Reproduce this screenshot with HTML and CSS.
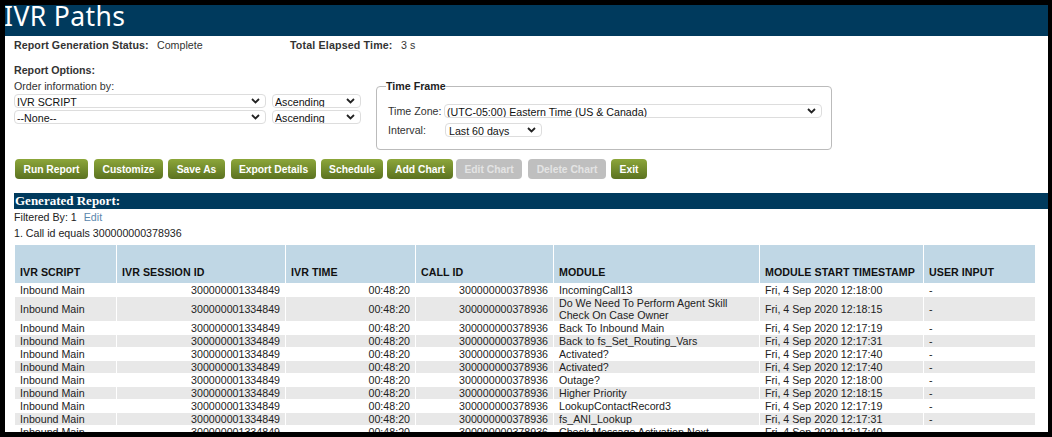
FILE: index.html
```html
<!DOCTYPE html>
<html lang="en">
<head>
<meta charset="utf-8">
<title>IVR Paths</title>
<link rel="stylesheet" href="styles.css">
</head>
<body>
<div class="frame">
  <h1 class="title">IVR Paths</h1>
  <div class="content">
    <div class="status">
      <b class="status-label">Report Generation Status:</b><span class="status-value">Complete</span>
      <b class="status-label elapsed">Total Elapsed Time:</b><span>3 s</span>
    </div>
    <div class="options">
      <div class="order">
        <b class="options-title">Report Options:</b>
        <div class="order-label">Order information by:</div>
        <div class="select-row">
          <select class="sel-order"><option>IVR SCRIPT</option></select>
          <select class="sel-dir"><option>Ascending</option></select>
        </div>
        <div class="select-row">
          <select class="sel-order"><option>--None--</option></select>
          <select class="sel-dir"><option>Ascending</option></select>
        </div>
      </div>
      <fieldset class="timeframe">
        <legend>Time Frame</legend>
        <div class="tf-row tf-first">
          <label class="tf-label">Time Zone:</label>
          <select class="sel-zone"><option>(UTC-05:00) Eastern Time (US &amp; Canada)</option></select>
        </div>
        <div class="tf-row">
          <label class="tf-label">Interval:</label>
          <select class="sel-interval"><option>Last 60 days</option></select>
        </div>
      </fieldset>
    </div>
    <div class="buttons">
      <button class="btn b1">Run Report</button>
      <button class="btn b2">Customize</button>
      <button class="btn b3">Save As</button>
      <button class="btn b4">Export Details</button>
      <button class="btn b5">Schedule</button>
      <button class="btn b6">Add Chart</button>
      <button class="btn off b7" disabled>Edit Chart</button>
      <button class="btn off b8" disabled>Delete Chart</button>
      <button class="btn b9">Exit</button>
    </div>
    <div class="report-bar">Generated Report:</div>
    <div class="filter">Filtered By: 1 <a class="edit">Edit</a></div>
    <div class="filter-rule">1. Call id equals 300000000378936</div>
    <table class="grid">
      <thead>
        <tr>
          <th class="c1">IVR SCRIPT</th><th class="c2">IVR SESSION ID</th><th class="c3">IVR TIME</th><th class="c4">CALL ID</th><th class="c5">MODULE</th><th class="c6">MODULE START TIMESTAMP</th><th class="c7">USER INPUT</th>
        </tr>
      </thead>
      <tbody>
        <tr><td>Inbound Main</td><td class="num">300000001334849</td><td class="num">00:48:20</td><td class="num">300000000378936</td><td>IncomingCall13</td><td>Fri, 4 Sep 2020 12:18:00</td><td>-</td></tr>
        <tr><td>Inbound Main</td><td class="num">300000001334849</td><td class="num">00:48:20</td><td class="num">300000000378936</td><td>Do We Need To Perform Agent Skill Check On Case Owner</td><td>Fri, 4 Sep 2020 12:18:15</td><td>-</td></tr>
        <tr><td>Inbound Main</td><td class="num">300000001334849</td><td class="num">00:48:20</td><td class="num">300000000378936</td><td>Back To Inbound Main</td><td>Fri, 4 Sep 2020 12:17:19</td><td>-</td></tr>
        <tr><td>Inbound Main</td><td class="num">300000001334849</td><td class="num">00:48:20</td><td class="num">300000000378936</td><td>Back to fs_Set_Routing_Vars</td><td>Fri, 4 Sep 2020 12:17:31</td><td>-</td></tr>
        <tr><td>Inbound Main</td><td class="num">300000001334849</td><td class="num">00:48:20</td><td class="num">300000000378936</td><td>Activated?</td><td>Fri, 4 Sep 2020 12:17:40</td><td>-</td></tr>
        <tr><td>Inbound Main</td><td class="num">300000001334849</td><td class="num">00:48:20</td><td class="num">300000000378936</td><td>Activated?</td><td>Fri, 4 Sep 2020 12:17:40</td><td>-</td></tr>
        <tr><td>Inbound Main</td><td class="num">300000001334849</td><td class="num">00:48:20</td><td class="num">300000000378936</td><td>Outage?</td><td>Fri, 4 Sep 2020 12:18:00</td><td>-</td></tr>
        <tr><td>Inbound Main</td><td class="num">300000001334849</td><td class="num">00:48:20</td><td class="num">300000000378936</td><td>Higher Priority</td><td>Fri, 4 Sep 2020 12:18:15</td><td>-</td></tr>
        <tr><td>Inbound Main</td><td class="num">300000001334849</td><td class="num">00:48:20</td><td class="num">300000000378936</td><td>LookupContactRecord3</td><td>Fri, 4 Sep 2020 12:17:19</td><td>-</td></tr>
        <tr><td>Inbound Main</td><td class="num">300000001334849</td><td class="num">00:48:20</td><td class="num">300000000378936</td><td>fs_ANI_Lookup</td><td>Fri, 4 Sep 2020 12:17:31</td><td>-</td></tr>
        <tr><td>Inbound Main</td><td class="num">300000001334849</td><td class="num">00:48:20</td><td class="num">300000000378936</td><td>Check Message Activation Next</td><td>Fri, 4 Sep 2020 12:17:40</td><td>-</td></tr>
      </tbody>
    </table>
  </div>
</div>
</body>
</html>
```
FILE: styles.css
```css
* { box-sizing: border-box; }
html, body { margin: 0; height: 437px; overflow: hidden; background: #000; }
body { font: 10.67px/13px "Liberation Sans", Arial, sans-serif; color: #333; padding: 5px 4px 5px 5px; }
.frame { height: 427px; background: #fff; overflow: hidden; }
.title { margin: 0; height: 31px; padding-top: 1px; background: #003a5d; color: #fff; font: 400 26.5px/21px "Noto Sans", sans-serif; letter-spacing: .4px; text-indent: -1px; }
.content { padding: 0 0 0 9px; }
.status { display: flex; height: 18px; padding-top: 3px; }
.status-label { width: 143px; font-weight: 700; letter-spacing: .08px; }
.status-value { width: 133px; }
.elapsed { width: 111px; letter-spacing: .15px; }
.options { display: flex; margin-top: 10px; height: 95px; }
.order { width: 362px; }
.options-title { display: block; font-weight: 700; height: 16px; }
.order-label { height: 14px; }
.select-row { display: flex; gap: 6px; margin-bottom: 2px; }
select { appearance: none; height: 14px; padding: 1px 0 0 2px; font: 10.67px/12px "Liberation Sans", Arial, sans-serif; color: #111; border: 1px solid #ddd; border-radius: 4px; background: #fff url("data:image/svg+xml,%3Csvg xmlns='http://www.w3.org/2000/svg' width='9' height='6'%3E%3Cpath d='M1 1l3.500 3.500L8 1' fill='none' stroke='%23222' stroke-width='1.800'/%3E%3C/svg%3E") no-repeat right 5px center; }
.sel-order { width: 252px; }
.sel-dir { width: 89px; }
.timeframe { width: 456px; height: 70px; margin: 16px 0 0; padding: 0 9px 0 11px; border: 1px solid #bbb; border-radius: 4px; }
.timeframe legend { padding: 0; margin-left: -2px; font-weight: 700; color: #222; }
.tf-row { display: flex; align-items: center; height: 14px; margin-bottom: 5px; }
.tf-first { margin-top: 11px; }
.tf-label { width: 56px; }
.sel-zone { width: 378px; }
.sel-interval { width: 97px; margin-left: 1px; padding-left: 3px; }
.buttons { display: flex; height: 20px; margin-left: 1px; }
.btn { height: 20px; margin: 0; padding: 0; border: 0; border-radius: 4px; font: 700 10.3px "Liberation Sans", Arial, sans-serif; color: #fff; background: linear-gradient(#8ca63a, #5b7220); }
.btn.off { background: #bfbfbf; color: #e4e4e4; }
.b1 { width: 73px; margin-right: 6px; }
.b2 { width: 69px; margin-right: 5px; }
.b3 { width: 57px; margin-right: 6px; }
.b4 { width: 85px; margin-right: 5px; }
.b5 { width: 62px; margin-right: 4px; }
.b6 { width: 66px; margin-right: 3px; }
.b7 { width: 66px; margin-right: 6px; }
.b8 { width: 78px; margin-right: 5px; }
.b9 { width: 36px; }
.report-bar { height: 16px; margin-top: 14px; padding-left: 1px; background: #003a5d; color: #fff; font: 700 13px/16px "Liberation Serif", serif; }
.filter { height: 16px; padding-top: 2px; color: #222; }
.edit { color: #5a87ad; margin-left: 4px; }
.filter-rule { height: 12px; padding-top: 2px; line-height: 13px; color: #222; }
.grid { margin-top: 7px; table-layout: fixed; width: 1022px; border-collapse: separate; border-spacing: 1px; color: #222; }
.grid th { height: 38px; padding: 0 5px 4px; vertical-align: bottom; text-align: left; background: #c0d7e5; font-weight: 700; color: #111; white-space: nowrap; letter-spacing: .05px; }
.grid td { padding: 0 5px; line-height: 12px; vertical-align: middle; }
.grid tbody tr:nth-child(even) td { background: #e8e8e8; }
.grid .num { text-align: right; }
.c1 { width: 101px; }
.c2 { width: 168px; }
.c3 { width: 129px; }
.c4 { width: 137px; }
.c5 { width: 205px; }
.c6 { width: 163px; }
.c7 { width: 111px; }
```
